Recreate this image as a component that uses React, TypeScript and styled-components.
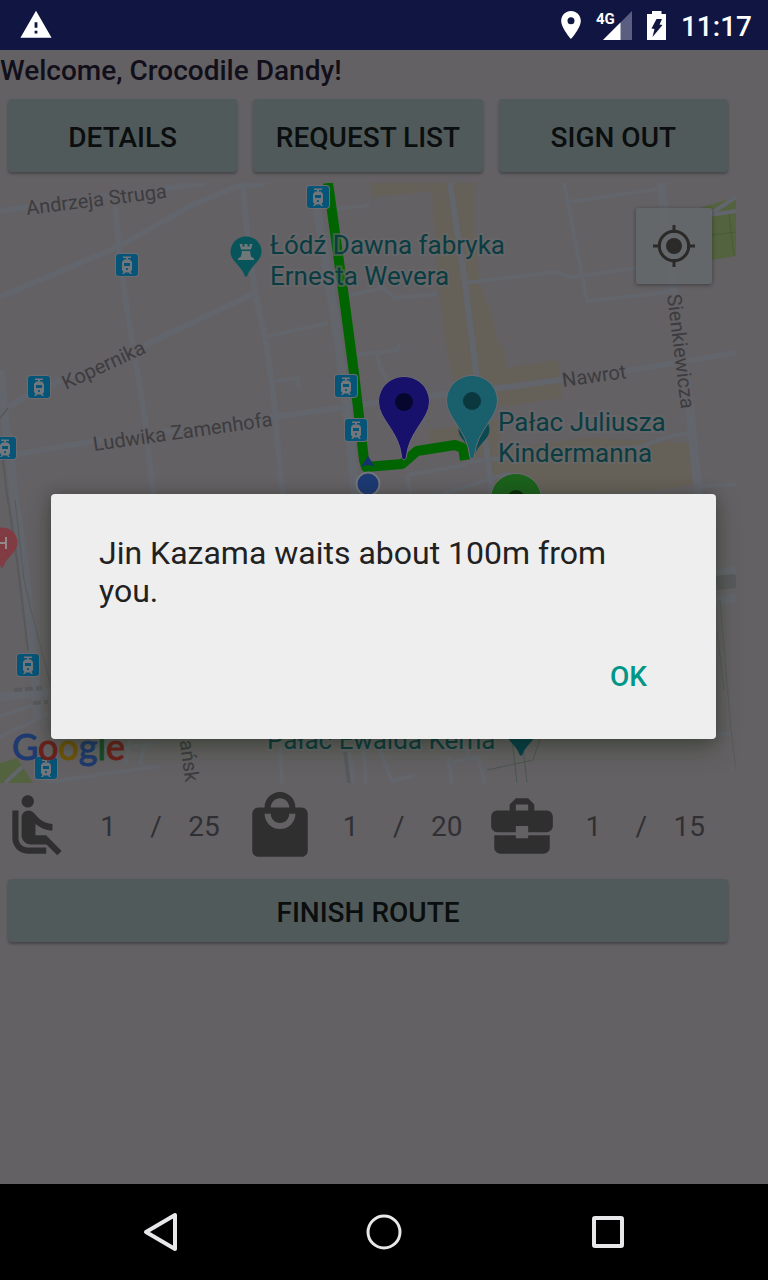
import React from "react";
import styled, { createGlobalStyle } from "styled-components";
import {
  MdAirlineSeatReclineNormal,
  MdBusinessCenter,
  MdLocalMall,
  MdWarning,
} from "react-icons/md";

const color = {
  status: "#101641",
  page: "#646164",
  button: "#515a5b",
  ink: "#0b0e0e",
  road: "#62656c",
  block: "#656159",
  park: "#54633f",
  poi: "#0a3c42",
  street: "#3c3c40",
  route: "#006500",
  tram: "#065478",
};

const GlobalStyle = createGlobalStyle`
  *, *::before, *::after { box-sizing: border-box; }
  body { margin: 0; background: ${color.page}; }
  body, button { font-family: Roboto, "Liberation Sans", sans-serif; }
`;

const Screen = styled.div`
  display: flex;
  flex-direction: column;
  min-height: 100vh;
  background: ${color.page};
`;

const StatusBar = styled.header`
  display: flex;
  align-items: center;
  height: 50px;
  padding: 0 16px 0 19px;
  background: ${color.status};
  color: #fff;
`;

const StatusTray = styled.div`
  display: flex;
  align-items: center;
  gap: 15px;
  margin-left: auto;
`;

const Clock = styled.time`
  padding-top: 3px;
  font-size: 28px;
  font-weight: 500;
  line-height: 32px;
`;

const Main = styled.main`
  position: relative;
  flex: 1;
  padding-right: 32px;
`;

const Welcome = styled.h1`
  margin: 0;
  padding: 4px 0 8px;
  font-size: 28px;
  font-weight: 500;
  line-height: 33px;
  color: #110f1a;
`;

const ButtonRow = styled.div`
  display: grid;
  grid-auto-flow: column;
  grid-auto-columns: 1fr;
  gap: 16px;
  padding: 4px 8px 11px;
`;

const RaisedButton = styled.button<{ $height: number }>`
  height: ${(p) => p.$height}px;
  padding: 3px 0 0;
  border: 0;
  border-radius: 4px;
  background: ${color.button};
  box-shadow: 0 2px 3px rgba(0, 0, 0, 0.3);
  font-size: 28px;
  font-weight: 500;
  line-height: 33px;
  text-transform: uppercase;
  color: ${color.ink};
`;

const MapPanel = styled.section`
  position: relative;
`;

const MapCanvas = styled.svg`
  display: block;
  width: 100%;
  height: auto;
`;

const LocateButton = styled.button`
  position: absolute;
  top: 25px;
  right: 24px;
  display: grid;
  place-items: center;
  width: 76px;
  height: 76px;
  padding: 0;
  border: 0;
  border-radius: 3px;
  background: rgba(100, 103, 107, 0.93);
  box-shadow: 0 1px 4px rgba(0, 0, 0, 0.4);
`;

const StreetLabel = styled.text`
  font-family: Roboto, sans-serif;
  font-size: 20px;
  fill: ${color.street};
  stroke: ${color.page};
  stroke-width: 3px;
  paint-order: stroke;
`;

const PlaceLabel = styled.text`
  font-family: Roboto, sans-serif;
  font-size: 26px;
  fill: ${color.poi};
  stroke: rgba(104, 104, 108, 0.6);
  stroke-width: 4px;
  paint-order: stroke;
`;

const Wordmark = styled.text`
  font-family: Lato, sans-serif;
  font-size: 36px;
  font-weight: 400;
  stroke-width: 1px;
`;

const Counters = styled.ul`
  display: grid;
  grid-template-columns: repeat(3, 1fr);
  margin: 0;
  padding: 6px 8px 12px 0;
  list-style: none;
`;

const Counter = styled.li`
  display: flex;
  align-items: center;
  font-size: 28px;
  line-height: 33px;
  color: #303034;
`;

const CounterIcon = styled.span`
  display: flex;
  width: 84px;
  color: #2f2f30;
`;

const CounterCell = styled.span`
  width: 48px;
  text-align: center;
`;

const Overlay = styled.div`
  position: absolute;
  inset: 0;
  display: flex;
  align-items: center;
  padding: 0 52px 2px 51px;
`;

const Dialog = styled.section`
  display: flex;
  flex-direction: column;
  flex: 1;
  padding: 40px 48px 38px;
  border-radius: 4px;
  background: #eee;
  box-shadow: 0 0 14px rgba(20, 20, 20, 0.25), 0 10px 24px rgba(22, 40, 10, 0.35);
`;

const Message = styled.p`
  margin: 0 0 42px;
  font-size: 32px;
  line-height: 38px;
  color: #212121;
`;

const DialogAction = styled.button`
  align-self: flex-end;
  height: 49px;
  padding: 0 21px;
  border: 0;
  background: none;
  font-size: 28px;
  font-weight: 500;
  line-height: 33px;
  color: #009688;
`;

const NavBar = styled.nav`
  display: grid;
  grid-template-columns: repeat(3, 1fr);
  height: 96px;
  padding: 0 48px;
  background: #000;
`;

const NavButton = styled.button`
  display: grid;
  place-items: center;
  padding: 0;
  border: 0;
  background: none;
`;

function PlaceIcon() {
  return (
    <svg width="20" height="28" viewBox="5 2 14 20" role="img" aria-label="Location">
      <path
        d="M12 2C8.130 2 5 5.130 5 9c0 5.250 7 13 7 13s7-7.750 7-13c0-3.870-3.130-7-7-7zm0 9.500a2.500 2.500 0 1 1 0-5 2.500 2.500 0 0 1 0 5z"
        fill="#fff"
      />
    </svg>
  );
}

function SignalIcon() {
  return (
    <svg width="36" height="34" viewBox="0 0 36 34" role="img" aria-label="4G signal">
      <path d="M7 32 36 3V32Z" fill="#5a5e80" />
      <path d="M7 32 24.500 14.500V32Z" fill="#fff" />
      <text x="0" y="16" fontFamily="Roboto" fontSize="15" fontWeight="700" fill="#fff">
        4G
      </text>
    </svg>
  );
}

function BatteryIcon() {
  return (
    <svg width="19" height="29" viewBox="0 0 19 29" role="img" aria-label="Battery charging">
      <path d="M5 0H14.500V3H19V29H0V3H5Z" fill="#fff" />
      <path d="M9.500 8H15L12.500 13.500 15.500 14 5.500 26 7.500 18 4.500 17.500Z" fill={color.status} />
    </svg>
  );
}

function LocateIcon() {
  return (
    <svg width="42" height="42" viewBox="0 0 42 42" fill="none" stroke="#2b2a28" strokeWidth="3">
      <circle cx="21" cy="21" r="14.700" />
      <circle cx="21" cy="21" r="8" fill="#2b2a28" stroke="none" />
      <path d="M21 0V8M21 34V42M0 21H8M34 21H42" />
    </svg>
  );
}

function TramStop({ x, y }: { x: number; y: number }) {
  return (
    <g transform={`translate(${x - 11} ${y - 11})`}>
      <rect x="-1" y="-1" width="24" height="24" rx="4" fill="#6a6c71" />
      <rect width="22" height="22" rx="3" fill={color.tram} />
      <g fill="#73777b">
        <path d="M7 2.500h8v1.500h-3v1.500h-2V4H7z" />
        <path
          fillRule="evenodd"
          d="M8 5.500h6l2 2.500v8l-1.500 2 1.500 2h-2l-1-1.500H9L8 20H6l1.500-2L6 16V8zM8 9v3h6V9zm3 5a1.100 1.100 0 1 0 0 2.200 1.100 1.100 0 0 0 0-2.200z"
        />
      </g>
    </g>
  );
}

function Marker({ x, y, fill, dot }: { x: number; y: number; fill: string; dot: string }) {
  return (
    <g transform={`translate(${x} ${y})`}>
      <path
        d="M0-25.500C14-25.500 25.500-14.500 25.500 0C25.500 17 5 29 2.500 54C2.200 59-2.200 59-2.500 54C-5 29-25.500 17-25.500 0C-25.500-14.500-14-25.500 0-25.500Z"
        fill={fill}
        stroke="#6c6c74"
        strokeWidth="1"
      />
      <circle r="9" fill={dot} />
    </g>
  );
}

function PoiPin({ x, y, fill, children }: { x: number; y: number; fill: string; children?: React.ReactNode }) {
  return (
    <g transform={`translate(${x} ${y})`}>
      <path
        d="M0-15.500C9-15.500 15.500-8.500 15.500 0C15.500 9 4 14 1 24.500H-1C-4 14-15.500 9-15.500 0C-15.500-8.500-9-15.500 0-15.500Z"
        fill={fill}
      />
      {children}
    </g>
  );
}

const minorRoads = [
  "M265 337 328 323",
  "M347 296 383 288 395 298 437 294",
  "M355 355 398 350 399 343",
  "M377 353 380 367 387 380",
  "M272 382 298 378 299 388",
  "M337 209 370 205",
  "M465 283 553 272 572 277 636 268",
  "M564 183 587 301 672 292",
  "M568 202 657 189",
  "M688 433 667 437 640 447 620 448",
  "M697 487 736 484",
  "M407 475 460 466 470 462 510 457",
  "M407 475 411 494",
  "M443 494 510 473",
  "M0 737 50 713",
  "M0 716 50 700",
  "M45 783 90 776 160 766",
  "M50 755 155 744M125 765 130 740M140 765 145 740",
  "M280 739 282 783",
  "M363 740 366 783",
  "M380 750 392 781 415 775",
  "M448 757 452 783",
  "M453 762 478 757 485 783",
  "M464 739 468 757",
  "M716 735 731 733",
];

const mainRoads = [
  "M0 211 26 207 169 188 205 183",
  "M0 297 118 247 190 206 235 187 265 184",
  "M115 203 119 247 127 310 133 345 145 420 154 500",
  "M243 187 247 230 255 293 265 337 272 383 283 500",
  "M0 412 28 395 60 381 145 345 255 293",
  "M0 457 90 442 280 416 345 407 400 399 500 388 625 371 736 353",
  "M450 183 465 283 477 380 493 500",
];

const wideRoads = [
  "M317 208 335 320 345 393 356 500",
  "M0 370 4 412 10 455 14 494 25 570 32 640 38 720",
  "M661 183 673 290 690 410 699 500",
  "M0 697 50 692",
  "M347 752 351 783",
  "M714 575 736 570M714 602 736 598",
];

const tramStops = [
  [318, 197], [127, 265], [39, 387], [5, 448],
  [346, 386], [356, 430], [28, 665], [46, 768],
];

function CityMap() {
  return (
    <MapCanvas viewBox="0 183 736 600" role="img" aria-label="Route map">
      <g fill={color.block}>
        <path d="M371 183H475L473 215 480 285 492 315 497 340 504 350 508 383 455 388 446 345 443 320 438 285 436 250 432 191 371 197Z" />
        <path d="M497 369 558 360 562 398 497 407Z" />
        <path d="M430 430 500 420V450L583 438 630 440 690 443 697 485 640 492 500 500 490 460 430 444Z" />
      </g>
      <g fill={color.park}>
        <path d="M700 208 736 197V256L712 260V208Z" />
        <path d="M0 763 17 758 33 783H0Z" />
      </g>
      <path d="M712 235 736 232M729 214 734 256" stroke="#455a3a" fill="none" />
      <g fill="none" stroke={color.road} strokeLinejoin="round">
        <g strokeWidth="4">
          {minorRoads.map((d) => <path key={d} d={d} />)}
          <path d="M710 214 736 197M710 215 736 211M5 783 22 767" />
        </g>
        <g strokeWidth="6">{mainRoads.map((d) => <path key={d} d={d} />)}</g>
        <g strokeWidth="9">{wideRoads.map((d) => <path key={d} d={d} />)}</g>
      </g>
      <g fill="none" stroke="#57595b">
        <path d="M3 460 7 494 17 560 28 650" strokeWidth="2" />
        <path d="M15 500 24 580 31 610 52 690" />
        <path d="M0 418 8 408" strokeWidth="2" />
        <path d="M345 752 349 783" strokeWidth="4" />
        <path d="M716 583 736 581" strokeWidth="14" />
        <path d="M14 690 42 688M33 703 48 702" strokeWidth="4" strokeDasharray="8 3" />
        <path d="M487 770 533 760 540 739M512 739 517 783M522 739 527 783" stroke="#4b5650" />
        <path d="M720 600 731 730 736 770M717 630 724 690" stroke="#585b58" />
      </g>

      <path
        d="M328 183 343 290 354 373 364 460 366 467 402 464 417 451 455 445 463 448 465 460"
        fill="none"
        stroke={color.route}
        strokeWidth="10"
        strokeLinejoin="round"
      />

      <StreetLabel transform="translate(27 215) rotate(-7)">Andrzeja Struga</StreetLabel>
      <StreetLabel transform="translate(66 390) rotate(-25)">Kopernika</StreetLabel>
      <StreetLabel transform="translate(94 451) rotate(-8)">Ludwika Zamenhofa</StreetLabel>
      <StreetLabel transform="translate(563 387) rotate(-8)">Nawrot</StreetLabel>
      <StreetLabel transform="translate(667 295) rotate(83)">Sienkiewicza</StreetLabel>
      <StreetLabel transform="translate(176 716) rotate(82)">Gdańsk</StreetLabel>

      {tramStops.map(([x, y]) => <TramStop key={`${x}-${y}`} x={x} y={y} />)}

      <PoiPin x={246} y={252} fill="#07545a">
        <path
          d="M-6.500-8H-3.500V-5.500H-1.500V-8H1.500V-5.500H3.500V-8H6.500L5-2.500H-5ZM-4-1H4L5 4.500 8 6.500V8H-8V6.500L-5 4.500Z"
          fill="#6f7779"
        />
      </PoiPin>
      <PoiPin x={2} y={543} fill="#803c42">
        <path d="M-4-6V6M4-6V6M-4 0H4" stroke="#92888b" strokeWidth="2" />
      </PoiPin>
      <PoiPin x={474} y={430} fill="#0a4a50" />
      <PoiPin x={521} y={731} fill="#04404c" />

      <PlaceLabel>
        <tspan x="270" y="254">Łódź Dawna fabryka</tspan>
        <tspan x="270" y="285">Ernesta Wevera</tspan>
      </PlaceLabel>
      <PlaceLabel>
        <tspan x="498" y="431">Pałac Juliusza</tspan>
        <tspan x="498" y="462">Kindermanna</tspan>
      </PlaceLabel>
      <PlaceLabel x="267" y="749">Pałac Ewalda Kerna</PlaceLabel>

      <Marker x={404} y={402} fill="#17116b" dot="#07062e" />
      <Marker x={472} y={401} fill="#1a5f6c" dot="#0a383e" />
      <Marker x={516} y={499} fill="#1c611c" dot="#082c08" />

      <path d="M368 456 361 467Q368 463 375 467Z" fill="#17316f" />
      <circle cx="368" cy="484" r="11.500" fill="#1d3a73" stroke="#74757c" strokeWidth="2" />

      <Wordmark x="12" y="760">
        <tspan fill="#1e3a70" stroke="#1e3a70">G</tspan>
        <tspan fill="#6d201d" stroke="#6d201d">o</tspan>
        <tspan fill="#705409" stroke="#705409">o</tspan>
        <tspan fill="#1e3a70" stroke="#1e3a70">g</tspan>
        <tspan fill="#174a26" stroke="#174a26">l</tspan>
        <tspan fill="#6d201d" stroke="#6d201d">e</tspan>
      </Wordmark>
    </MapCanvas>
  );
}

const counters = [
  { label: "Seats", Icon: MdAirlineSeatReclineNormal, used: 1, total: 25 },
  { label: "Bags", Icon: MdLocalMall, used: 1, total: 20 },
  { label: "Suitcases", Icon: MdBusinessCenter, used: 1, total: 15 },
];

export default function App() {
  return (
    <Screen>
      <GlobalStyle />
      <StatusBar>
        <MdWarning size={34} aria-label="Warning" />
        <StatusTray>
          <PlaceIcon />
          <SignalIcon />
          <BatteryIcon />
          <Clock>11:17</Clock>
        </StatusTray>
      </StatusBar>

      <Main>
        <Welcome>Welcome, Crocodile Dandy!</Welcome>
        <ButtonRow>
          <RaisedButton $height={73}>Details</RaisedButton>
          <RaisedButton $height={73}>Request list</RaisedButton>
          <RaisedButton $height={73}>Sign out</RaisedButton>
        </ButtonRow>
        <MapPanel>
          <CityMap />
          <LocateButton aria-label="My location">
            <LocateIcon />
          </LocateButton>
        </MapPanel>
        <Counters>
          {counters.map(({ label, Icon, used, total }) => (
            <Counter key={label} aria-label={label}>
              <CounterIcon>
                <Icon size={74} />
              </CounterIcon>
              <CounterCell>{used}</CounterCell>
              <CounterCell>/</CounterCell>
              <CounterCell>{total}</CounterCell>
            </Counter>
          ))}
        </Counters>
        <ButtonRow>
          <RaisedButton $height={63}>Finish route</RaisedButton>
        </ButtonRow>

        <Overlay>
          <Dialog role="dialog" aria-modal="true" aria-describedby="dialog-message">
            <Message id="dialog-message">Jin Kazama waits about 100m from you.</Message>
            <DialogAction>OK</DialogAction>
          </Dialog>
        </Overlay>
      </Main>

      <NavBar>
        <NavButton aria-label="Back">
          <svg width="38" height="44" viewBox="0 0 38 44">
            <path d="M5 22 34 5V39Z" fill="none" stroke="#e8e7ea" strokeWidth="4" strokeLinejoin="round" />
          </svg>
        </NavButton>
        <NavButton aria-label="Home">
          <svg width="38" height="38" viewBox="0 0 38 38">
            <ellipse cx="19" cy="19" rx="16" ry="16" fill="none" stroke="#e8e7ea" strokeWidth="3" />
          </svg>
        </NavButton>
        <NavButton aria-label="Recent apps">
          <svg width="32" height="34" viewBox="0 0 32 34">
            <rect x="2" y="3" width="28" height="28" rx="1" fill="none" stroke="#e8e7ea" strokeWidth="4" />
          </svg>
        </NavButton>
      </NavBar>
    </Screen>
  );
}
